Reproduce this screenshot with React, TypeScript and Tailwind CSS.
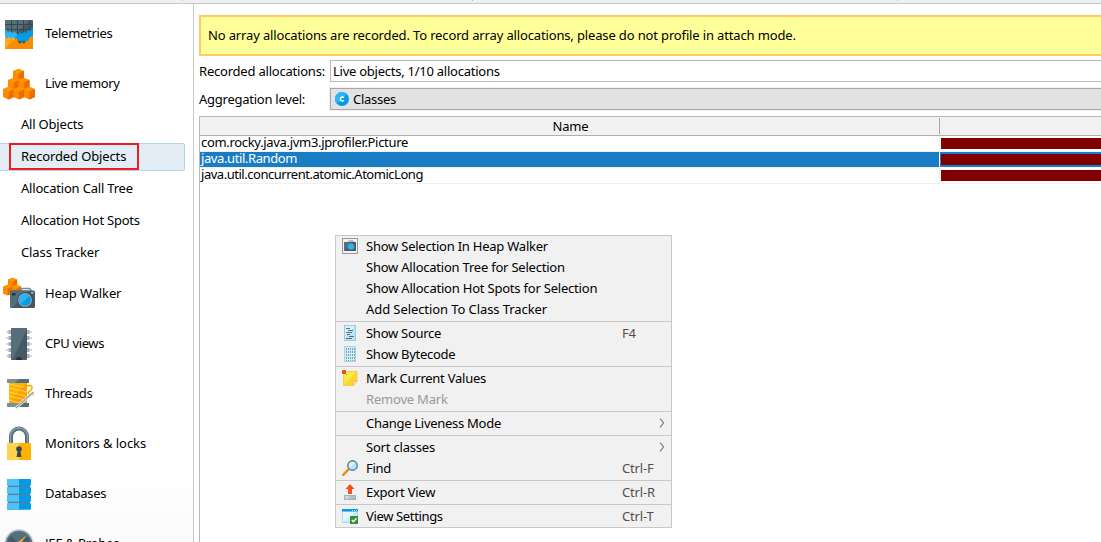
import type { ReactNode } from "react";

/* ---------- sidebar icons ---------- */

function Cube({ x, y, s = 1 }: { x: number; y: number; s?: number }) {
  return (
    <g transform={`translate(${x} ${y}) scale(${s})`}>
      <path d="M0 0 5.500 -2 11 0V8L5.500 10.500 0 8Z" fill="#fb8c00" />
      <path d="M0 0 5.500 -2 11 0 5.500 2.400Z" fill="#ff9800" />
      <path d="M5.500 2.400 11 0V8L5.500 10.500Z" fill="#ef6c00" />
    </g>
  );
}

function SideSvg({ children }: { children: ReactNode }) {
  return (
    <svg width="36" height="50" viewBox="0 0 36 50" className="block shrink-0">
      {children}
    </svg>
  );
}

const TelemetryIcon = () => (
  <SideSvg>
    <rect x="5" y="11" width="28" height="29" rx="1" fill="#455a64" />
    <path d="M5 12a1 1 0 0 1 1-1H30L13 28H5Z" fill="#546e7a" />
    <path d="M11.500 11V28M17.500 11V28M23.500 11V28M29.500 11V28M5 15.500H33M5 20.500H33" stroke="#37474f" strokeWidth="1" />
    <path d="M5 20 7 22 8 24 10 22 12 24 14 23 16 24 18 26 20 23 22 25 24 23 26 24 28 21 30 22 33 18.500V32H5Z" fill="#039be5" />
    <path d="M5 20 7 22 8 24 10 22 12 24 14 23 16 24 18 26 10 34 5 32Z" fill="#29b6f6" />
    <path d="M5 27 7 30 9 28 11 30 13 28 15 30 17 29 18 33 20 35 22 33 24 35 26 32 28 32 30 28 33 26.500V39a1 1 0 0 1-1 1H6a1 1 0 0 1-1-1Z" fill="#fb8c00" />
    <path d="M5 27 7 30 9 28 11 30 13 28 15 30 5 39.500Z" fill="#ffa726" />
  </SideSvg>
);

const MemoryIcon = () => (
  <SideSvg>
    <Cube x={13} y={12} />
    <Cube x={8} y={21} />
    <Cube x={18.500} y={21} />
    <Cube x={3} y={30} />
    <Cube x={13.500} y={30} />
    <Cube x={24} y={30} />
  </SideSvg>
);

const HeapIcon = () => (
  <SideSvg>
    <Cube x={8} y={10.500} s={0.83} />
    <Cube x={3} y={17.500} s={0.86} />
    <Cube x={12} y={17.500} s={0.83} />
    <path d="M20 22 22 19.500H29.500L31.500 22" fill="none" stroke="#78909c" strokeWidth="1.600" />
    <rect x="10" y="21.500" width="25" height="17.500" rx="1.500" fill="#455a64" />
    <path d="M11.500 21.500H29L12 39h-.5a1.500 1.500 0 0 1-1.500-1.500V23a1.500 1.500 0 0 1 1.500-1.500Z" fill="#546e7a" />
    <rect x="12" y="24" width="3.500" height="2.500" fill="#263238" />
    <circle cx="25" cy="31" r="7.800" fill="#37474f" />
    <circle cx="25" cy="31" r="7" fill="#90a4ae" />
    <circle cx="25" cy="31" r="5.800" fill="#039be5" />
    <path d="M19.200 31A5.800 5.800 0 0 1 29.200 27L21 35.100Z" fill="#29b6f6" />
    <rect x="31" y="23" width="2.500" height="1.500" fill="#b0bec5" />
  </SideSvg>
);

const CpuIcon = () => (
  <SideSvg>
    {[13, 19, 25, 31, 37].map((y) => (
      <g key={y}>
        <path d={`M6 ${y}H11M27 ${y}H32`} stroke="#cfd8dc" strokeWidth="2" />
        <path d={`M8.500 ${y}H11M27 ${y}H29.500`} stroke="#a3b3bb" strokeWidth="4" />
      </g>
    ))}
    <rect x="11" y="9" width="16" height="32" rx="1" fill="#455a64" />
    <path d="M12 9H27V10L13 40 11 41V10a1 1 0 0 1 1-1Z" fill="#546e7a" />
    <path d="M16 41a3 3 0 0 1 6 0Z" fill="#263238" />
  </SideSvg>
);

const ThreadIcon = () => (
  <SideSvg>
    <rect x="9" y="13" width="18" height="25" fill="#ffa000" />
    <path d="M9 13H26L9 34Z" fill="#ffb300" />
    <path d="M9 15 24 18M9 19 27 23M9 23 26 27M9 27 26 31M9 31 22 35" stroke="#ffd54f" strokeWidth="0.900" />
    <path d="M7 11a1 1 0 0 1 1-1H28a1 1 0 0 1 1 1V14H7Z" fill="#546e7a" />
    <path d="M7 11a1 1 0 0 1 1-1H19L15 14H7Z" fill="#78909c" />
    <path d="M7 34H29V37a1 1 0 0 1-1 1H8a1 1 0 0 1-1-1Z" fill="#546e7a" />
    <path d="M7 34H19L16 38H8a1 1 0 0 1-1-1Z" fill="#78909c" />
    <path d="M27 18C27 16 32 15.500 32 19S26 23 29 25 33 24 34 26" fill="none" stroke="#ffb300" strokeWidth="1.700" />
    <path d="M33.500 23 16 39" stroke="#eceff1" strokeWidth="2.800" />
    <path d="M33.500 23 16 39" stroke="#90a4ae" strokeWidth="1.400" />
  </SideSvg>
);

const LockIcon = () => (
  <SideSvg>
    <path d="M11 24V17.500a8 8 0 0 1 16 0V24" fill="none" stroke="#546e7a" strokeWidth="4" />
    <path d="M10.500 24V17.500a8.500 8.500 0 0 1 17 0V24" fill="none" stroke="#90a4ae" strokeWidth="1.300" />
    <rect x="7" y="24" width="24" height="17" rx="1" fill="#ffb300" />
    <path d="M8 24H19V41H8a1 1 0 0 1-1-1V25a1 1 0 0 1 1-1Z" fill="#ffd54f" />
    <circle cx="19" cy="30" r="2.800" fill="#37474f" />
    <path d="M18 30H20L21.500 38H16.500Z" fill="#37474f" />
  </SideSvg>
);

const DatabaseIcon = () => (
  <SideSvg>
    <rect x="8" y="12" width="22" height="26" fill="#607d8b" />
    {[10, 18, 26, 34].map((y) => (
      <g key={y}>
        <rect x="7" y={y} width="24" height="6.800" rx="1" fill="#039be5" />
        <path d={`M8 ${y}H19V${y + 6.8}H8a1 1 0 0 1-1-1V${y + 1}a1 1 0 0 1 1-1Z`} fill="#4fc3f7" />
      </g>
    ))}
  </SideSvg>
);

const GaugeIcon = () => (
  <SideSvg>
    <circle cx="19" cy="25" r="15" fill="#cfd8dc" />
    <circle cx="19" cy="25" r="13.500" fill="#607d8b" />
    <circle cx="19" cy="25" r="11.500" fill="#455a64" />
    <path d="M11 17A11.500 11.500 0 0 1 27 17L19 25Z" fill="#546e7a" />
    <path d="M27 16 18 28 15.500 25Z" fill="#ffa726" />
  </SideSvg>
);

/* ---------- menu icons ---------- */

function MenuSvg({ children }: { children: ReactNode }) {
  return (
    <svg width="16" height="16" viewBox="0 0 16 16" className="block">
      {children}
    </svg>
  );
}

const CameraIcon = () => (
  <MenuSvg>
    <rect x="0.500" y="0.500" width="15" height="15" fill="none" stroke="#37474f" strokeDasharray="1 1" />
    <path d="M6.500 4.500 7 3H11L11.500 4.500" fill="none" stroke="#78909c" />
    <rect x="2" y="4" width="12" height="9" rx="0.500" fill="#455a64" />
    <path d="M2 4H9L3 13H2Z" fill="#546e7a" />
    <circle cx="9" cy="8.500" r="3.600" fill="#607d8b" />
    <circle cx="9" cy="8.500" r="2.800" fill="#29b6f6" />
  </MenuSvg>
);

const SourceIcon = () => (
  <MenuSvg>
    <rect x="2.500" y="0.500" width="11" height="15" fill="#b9e5f7" stroke="#9fcbe0" />
    <path d="M3 1H13L3 13Z" fill="#d6f1fc" />
    <path d="M4 3.500H8M6 5.500H11M4 7.500H10M5 9.500H8M7 11.500H12M4 13.500H10" stroke="#55717f" />
  </MenuSvg>
);

const BytecodeIcon = () => (
  <MenuSvg>
    <rect x="2.500" y="0.500" width="11" height="15" fill="#d0eefa" stroke="#a9d4e7" />
    <path d="M4.500 2V15M6.500 2V15M8.500 2V15M10.500 2V15M12.500 2V15" stroke="#7fa3b4" strokeDasharray="2 1" />
  </MenuSvg>
);

const NoteIcon = () => (
  <MenuSvg>
    <path d="M1.500 1.500H15V11L11 15.500H1.500Z" fill="#fdd835" stroke="#fbc02d" strokeWidth="0.700" />
    <path d="M2 2H14L2 14Z" fill="#ffe94a" />
    <path d="M15 11H11V15.500Z" fill="#fff59d" stroke="#f9a825" strokeWidth="0.700" />
    <path d="M2 2 5 5" stroke="#78909c" />
    <rect x="0" y="0" width="4" height="4" rx="1" fill="#e65100" />
  </MenuSvg>
);

const FindIcon = () => (
  <MenuSvg>
    <path d="M1.200 14.800 6.500 9.500" stroke="#ef8a17" strokeWidth="2.400" strokeLinecap="round" />
    <circle cx="10.500" cy="5.500" r="4.700" fill="#b3e5fc" stroke="#607d8b" strokeWidth="1.400" />
    <path d="M7.300 5.500A3.300 3.300 0 0 1 12.500 2.700L8.200 8Z" fill="#e1f5fe" />
  </MenuSvg>
);

const ExportIcon = () => (
  <MenuSvg>
    <path d="M8 0 12.500 5H10V10H6V5H3.500Z" fill="#f4511e" />
    <rect x="2.500" y="11.500" width="11" height="4" fill="#b0bec5" stroke="#a3b1b8" />
    <path d="M3 12H8L6 15H3Z" fill="#cfd8dc" />
  </MenuSvg>
);

const SettingsIcon = () => (
  <MenuSvg>
    <rect x="0.500" y="1.500" width="15" height="13" fill="#c4ebfa" stroke="#b0d9eb" />
    <path d="M1 4H14L1 14Z" fill="#e6f7fe" />
    <rect x="0" y="1" width="16" height="2.500" fill="#039be5" />
    <path d="M10 2.500h1M12 2.500h1M14 2.500h1" stroke="#b3e5fc" />
    <rect x="8" y="8" width="8" height="8" fill="#388e3c" />
    <path d="M9.800 12 11.500 13.700 14.500 10.300" fill="none" stroke="#fff" strokeWidth="1.300" />
  </MenuSvg>
);

/* ---------- sidebar ---------- */

type SideProps = { icon: ReactNode; label: string; track: string };

function SideItem({ icon, label, track }: SideProps) {
  return (
    <div className="flex h-[50px] shrink-0 items-center">
      {icon}
      <span className={`pb-0.5 pl-[9px] ${track}`}>{label}</span>
    </div>
  );
}

function SubItem({ label, track }: { label: string; track: string }) {
  return (
    <div className="flex h-8 shrink-0 items-center pb-0.5 pl-[21px]">
      <span className={track}>{label}</span>
    </div>
  );
}

function Sidebar() {
  return (
    <aside className="flex w-[194px] shrink-0 flex-col overflow-hidden border-r border-[#c8c8c8] bg-linear-to-b from-white from-88% to-[#fafafa] pt-[5px]">
      <SideItem icon={<TelemetryIcon />} label="Telemetries" track="tracking-[-0.3px]" />
      <SideItem icon={<MemoryIcon />} label="Live memory" track="tracking-[-0.42px]" />
      <SubItem label="All Objects" track="tracking-[-0.2px]" />
      <div className="flex h-8 shrink-0 items-start pt-0.5">
        <div className="flex h-7 w-[185px] items-start rounded-r-[2px] border border-l-0 border-[#b5d2e6] bg-[#e3edf6] pl-[9px]">
          <div className="-mt-px flex h-[27px] w-[130px] items-center border-2 border-[#ed1c24] pb-px pl-2.5">
            <span className="whitespace-nowrap tracking-[-0.13px]">Recorded Objects</span>
          </div>
        </div>
      </div>
      <SubItem label="Allocation Call Tree" track="tracking-[-0.19px]" />
      <SubItem label="Allocation Hot Spots" track="tracking-[-0.22px]" />
      <SubItem label="Class Tracker" track="tracking-[-0.1px]" />
      <SideItem icon={<HeapIcon />} label="Heap Walker" track="tracking-[-0.13px]" />
      <SideItem icon={<CpuIcon />} label="CPU views" track="tracking-[-0.38px]" />
      <SideItem icon={<ThreadIcon />} label="Threads" track="tracking-[-0.25px]" />
      <SideItem icon={<LockIcon />} label="Monitors & locks" track="tracking-[-0.06px]" />
      <SideItem icon={<DatabaseIcon />} label="Databases" track="tracking-[-0.3px]" />
      <SideItem icon={<GaugeIcon />} label="JEE & Probes" track="tracking-[-0.2px]" />
    </aside>
  );
}

/* ---------- table ---------- */

function Row({ name, track, selected }: { name: string; track: string; selected?: boolean }) {
  return (
    <div className="flex h-4">
      <div className={`flex h-4 w-[739px] shrink-0 items-center border-b border-[#f0f0f0] pb-[3px] pl-px leading-none ${selected ? "bg-[#1a7dc4] text-white" : ""}`}>
        <span className={track}>{name}</span>
      </div>
      <div className={`w-px shrink-0 ${selected ? "bg-white" : "bg-[#f0f0f0]"}`} />
      <div className={`flex-1 border-b py-0.5 pl-px ${selected ? "border-white bg-[#1a7dc4]" : "border-[#f0f0f0]"}`}>
        <div className="h-[11px] bg-[#800000]" />
      </div>
    </div>
  );
}

/* ---------- context menu ---------- */

type ItemProps = { label: string; track: string; icon?: ReactNode; keys?: string; sub?: boolean; disabled?: boolean };

function MenuItem({ label, track, icon, keys, sub, disabled }: ItemProps) {
  return (
    <div className="flex h-[21px] items-start">
      <div className="w-[30px] shrink-0 pl-1.5 pt-0.5">{icon}</div>
      <span className={`w-64 whitespace-nowrap pt-px ${track} ${disabled ? "text-[#999]" : ""}`}>{label}</span>
      {keys && <span className="pt-px tracking-[-0.15px] text-[#505050]">{keys}</span>}
      {sub && (
        <svg width="6" height="12" viewBox="0 0 6 12" className="ml-[37px] mt-1">
          <path d="M1 1.500 4.500 6 1 10.500" fill="none" stroke="#777" strokeWidth="1.200" />
        </svg>
      )}
    </div>
  );
}

const Separator = () => <div className="my-px h-px bg-[#c8c8c8]" />;

function ContextMenu() {
  return (
    <div className="absolute left-[335px] top-[235px] w-[337px] border border-[#c8c8c8] bg-[#f1f1f1]">
      <MenuItem icon={<CameraIcon />} label="Show Selection In Heap Walker" track="tracking-[-0.23px]" />
      <MenuItem label="Show Allocation Tree for Selection" track="tracking-[-0.22px]" />
      <MenuItem label="Show Allocation Hot Spots for Selection" track="tracking-[-0.21px]" />
      <MenuItem label="Add Selection To Class Tracker" track="tracking-[-0.08px]" />
      <Separator />
      <MenuItem icon={<SourceIcon />} label="Show Source" track="tracking-[-0.27px]" keys="F4" />
      <MenuItem icon={<BytecodeIcon />} label="Show Bytecode" track="tracking-[-0.27px]" />
      <Separator />
      <MenuItem icon={<NoteIcon />} label="Mark Current Values" track="tracking-[-0.25px]" />
      <MenuItem label="Remove Mark" track="tracking-[-0.2px]" disabled />
      <Separator />
      <MenuItem label="Change Liveness Mode" track="tracking-[-0.28px]" sub />
      <Separator />
      <MenuItem label="Sort classes" track="tracking-[-0.2px]" sub />
      <MenuItem icon={<FindIcon />} label="Find" track="tracking-[-0.3px]" keys="Ctrl-F" />
      <Separator />
      <MenuItem icon={<ExportIcon />} label="Export View" track="tracking-[-0.25px]" keys="Ctrl-R" />
      <Separator />
      <MenuItem icon={<SettingsIcon />} label="View Settings" track="tracking-[-0.35px]" keys="Ctrl-T" />
    </div>
  );
}

/* ---------- page ---------- */

export default function App() {
  return (
    <div className="relative flex h-[542px] w-[1101px] flex-col overflow-hidden bg-white font-['Noto_Sans','Noto_Sans_CJK_SC',sans-serif] text-[13px] leading-[18px] text-black">
      <div className="flex h-1 shrink-0 items-start border-b border-[#c8c8c8] bg-[#f0f0f0]">
        <div className="ml-[182px] h-px w-px bg-[#bbb]" />
        <div className="ml-[289px] h-px w-px bg-[#bbb]" />
        <div className="ml-[424px] h-px w-px bg-[#bbb]" />
      </div>
      <div className="flex min-h-0 flex-1">
        <Sidebar />
        <main className="flex min-w-0 flex-1 flex-col pl-[5px] pt-[11px]">
          <div className="flex h-[41px] shrink-0 items-center border-2 border-r-0 border-[#ffc966] bg-[#ffff99] pb-px pl-[7px]">
            <span className="tracking-[-0.145px]">
              No array allocations are recorded. To record array allocations, please do not profile in attach mode.
            </span>
          </div>
          <div className="mt-1 flex h-[22px] shrink-0 items-center">
            <span className="w-[131px] shrink-0 tracking-[-0.21px]">Recorded allocations:</span>
            <div className="flex h-[22px] flex-1 items-center border border-r-0 border-[#b9b9b9] pl-0.5">
              <span className="tracking-[-0.25px]">Live objects, 1/10 allocations</span>
            </div>
          </div>
          <div className="mt-[6px] flex h-[22px] shrink-0 items-center">
            <span className="w-[131px] shrink-0 tracking-[-0.25px]">Aggregation level:</span>
            <div className="flex h-[22px] flex-1 items-center border border-r-0 border-[#a8a8a8] bg-[#e2e2e2] pl-1 shadow-[0_0_0_1px_#f0f0f0]">
              <svg width="14" height="14" viewBox="0 0 14 14" className="block">
                <circle cx="7" cy="7" r="7" fill="#039be5" />
                <path d="M2 12A7 7 0 0 1 12 2Z" fill="#29b6f6" />
                <path d="M8.900 5.700A2 2 0 1 0 8.900 8.300" fill="none" stroke="#fff" strokeWidth="1.500" />
              </svg>
              <span className="pl-1 tracking-[-0.28px]">Classes</span>
            </div>
          </div>
          <div className="mt-[6px] flex-1 border-l border-t border-[#b9b9b9]">
            <div className="flex h-[19px] border-b border-[#b0b0b0] bg-[#f1f1f1]">
              <div className="flex w-[739px] items-center justify-center pl-0.5 tracking-[-0.2px]">Name</div>
              <div className="my-px w-px bg-[#a8a8a8]" />
            </div>
            <Row name="com.rocky.java.jvm3.jprofiler.Picture" track="tracking-[-0.32px]" />
            <Row name="java.util.Random" track="tracking-[-0.4px]" selected />
            <Row name="java.util.concurrent.atomic.AtomicLong" track="tracking-[-0.47px]" />
          </div>
        </main>
      </div>
      <ContextMenu />
    </div>
  );
}
